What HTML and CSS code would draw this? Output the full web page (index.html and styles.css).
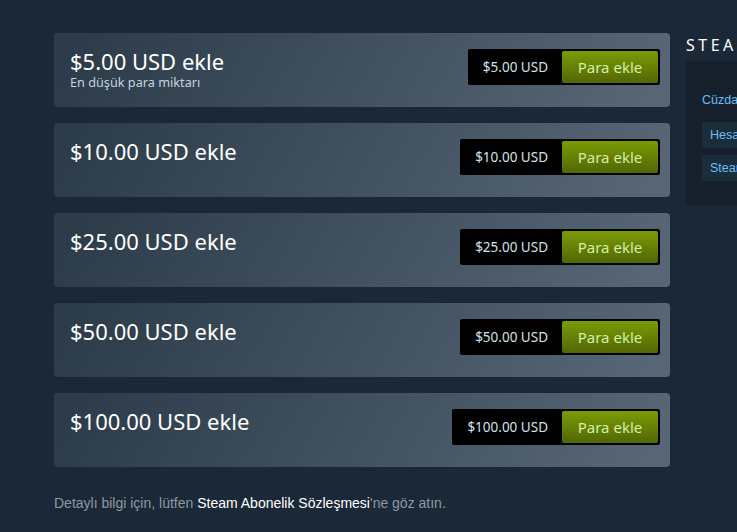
FILE: index.html
```html
<!DOCTYPE html>
<html lang="tr">
<head>
<meta charset="utf-8">
<title>Steam Cüzdanı</title>
<link rel="stylesheet" href="styles.css">
</head>
<body>
<div class="page">
  <div class="main">
    <div class="cards">
      <div class="card">
        <div class="card-text">
          <h1 class="card-title">$5.00 USD ekle</h1>
          <div class="card-sub">En düşük para miktarı</div>
        </div>
        <div class="buy">
          <div class="price">$5.00 USD</div>
          <a class="btn-green">Para ekle</a>
        </div>
      </div>
      <div class="card">
        <div class="card-text">
          <h1 class="card-title">$10.00 USD ekle</h1>
        </div>
        <div class="buy">
          <div class="price">$10.00 USD</div>
          <a class="btn-green">Para ekle</a>
        </div>
      </div>
      <div class="card">
        <div class="card-text">
          <h1 class="card-title">$25.00 USD ekle</h1>
        </div>
        <div class="buy">
          <div class="price">$25.00 USD</div>
          <a class="btn-green">Para ekle</a>
        </div>
      </div>
      <div class="card">
        <div class="card-text">
          <h1 class="card-title">$50.00 USD ekle</h1>
        </div>
        <div class="buy">
          <div class="price">$50.00 USD</div>
          <a class="btn-green">Para ekle</a>
        </div>
      </div>
      <div class="card">
        <div class="card-text">
          <h1 class="card-title">$100.00 USD ekle</h1>
        </div>
        <div class="buy">
          <div class="price">$100.00 USD</div>
          <a class="btn-green">Para ekle</a>
        </div>
      </div>
    </div>
    <p class="footnote">Detaylı bilgi için, lütfen <a class="footnote-link">Steam Abonelik Sözleşmesi</a>'ne göz atın.</p>
  </div>
  <div class="side">
    <h2 class="side-title">STEAM HESABINIZ</h2>
    <div class="side-panel">
      <a class="side-link">Cüzdan bakiyeniz</a>
      <a class="side-box">Hesap ayrıntıları</a>
      <a class="side-box">Steam Cüzdanı geçmişi</a>
    </div>
  </div>
</div>
</body>
</html>
```
FILE: styles.css
```css
html, body {
  margin: 0;
  padding: 0;
  background: #1b2838;
  overflow: hidden;
  height: 100%;
}
.page {
  display: flex;
  gap: 16px;
  padding: 33px 0 0 54px;
  width: 1000px;
}
.main {
  width: 616px;
  flex: none;
}
.cards {
  display: flex;
  flex-direction: column;
  gap: 16px;
}
.card {
  height: 74px;
  box-sizing: border-box;
  padding: 14px 10px 14px 16px;
  border-radius: 4px;
  background: linear-gradient(-60deg, rgba(226, 244, 255, 0.3) 5%, rgba(84, 107, 115, 0.3) 95%);
  display: flex;
  justify-content: space-between;
  align-items: flex-start;
}
.card-title {
  margin: 0;
  font-family: "Noto Sans", sans-serif;
  font-weight: 400;
  font-size: 22px;
  line-height: 28px;
  color: #ffffff;
}
.card-sub {
  font-family: "Noto Sans", sans-serif;
  font-size: 12.7px;
  line-height: 14px;
  color: #c6d4df;
}
.buy {
  margin-top: 2px;
  display: flex;
  align-items: center;
  background: #000;
  padding: 2px;
  border-radius: 2px;
  height: 32px;
}
.price {
  font-family: "Noto Sans", sans-serif;
  font-size: 13.5px;
  color: #d6e0e8;
  padding: 0 14px 0 13px;
}
.btn-green {
  display: flex;
  align-items: center;
  justify-content: center;
  width: 96px;
  height: 32px;
  border-radius: 2px;
  background: linear-gradient(to bottom, #799905 5%, #536904 95%);
  color: #d2efa9;
  font-family: "Noto Sans", sans-serif;
  font-size: 15px;
  cursor: pointer;
}
.footnote {
  margin: 28px 0 0 0;
  font-family: "Liberation Sans", Arial, sans-serif;
  font-size: 14px;
  color: #8f98a0;
}
.footnote-link {
  color: #ffffff;
}
.side {
  width: 300px;
  flex: none;
}
.side-title {
  margin: 0;
  font-family: "Noto Sans", sans-serif;
  font-weight: 400;
  font-size: 16px;
  line-height: 24px;
  letter-spacing: 3.5px;
  color: #ffffff;
  height: 28px;
}
.side-panel {
  background: rgba(0, 0, 0, 0.2);
  padding: 32px 16px 24px 16px;
  display: flex;
  flex-direction: column;
  gap: 7px;
}
.side-link {
  font-family: "Liberation Sans", Arial, sans-serif;
  font-size: 12.5px;
  color: #66c0f4;
  margin-bottom: 8px;
}
.side-box {
  font-family: "Liberation Sans", Arial, sans-serif;
  font-size: 12.5px;
  line-height: 26px;
  height: 26px;
  padding-left: 8px;
  background: rgba(103, 193, 245, 0.08);
  color: #66c0f4;
}
```
